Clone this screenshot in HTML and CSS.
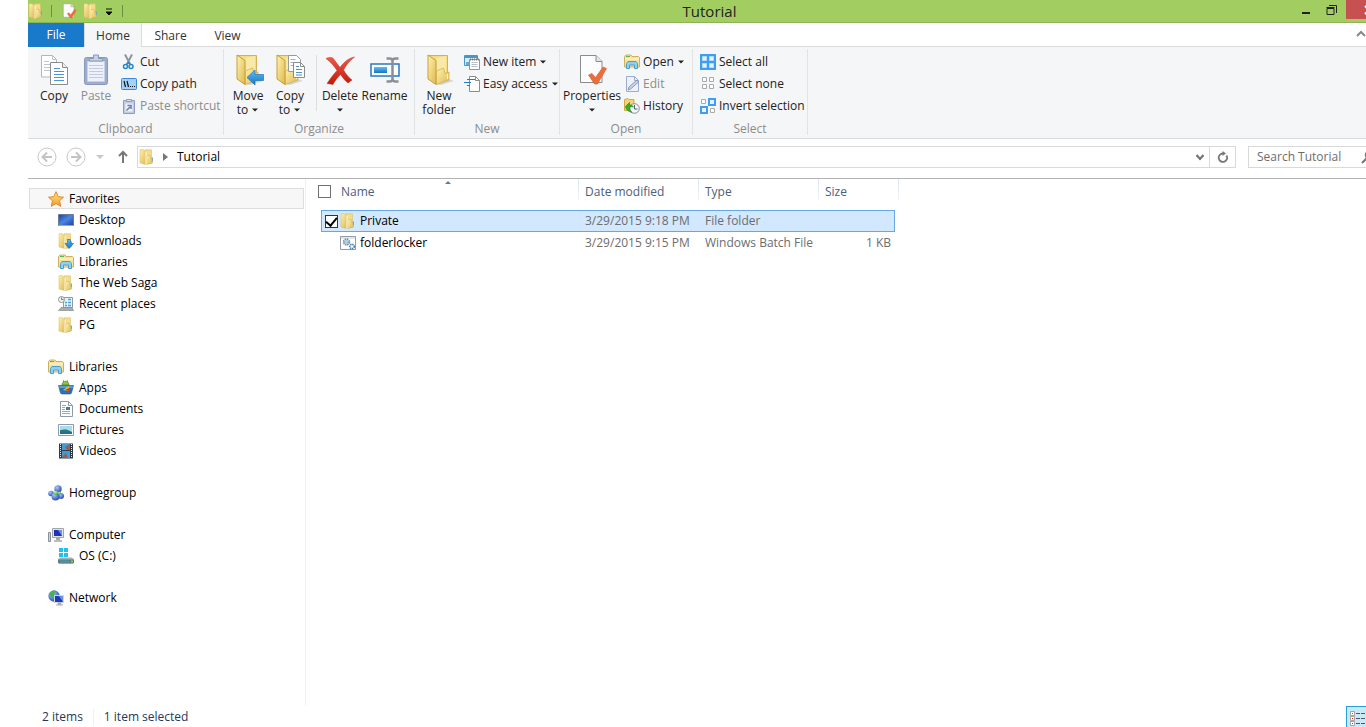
FILE: index.html
```html
<!DOCTYPE html>
<html lang="en">
<head>
  <meta charset="UTF-8">
  <meta name="viewport" content="width=device-width, initial-scale=1.0">
  <title>Tutorial</title>
  <link rel="stylesheet" href="styles.css">
</head>
<body>

<!-- shared icons -->
<svg class="sprite" aria-hidden="true">
  <defs>
    <linearGradient id="gold" x1="0" y1="0" x2="1" y2="1">
      <stop offset="0" stop-color="#fdf3b4"/>
      <stop offset="1" stop-color="#e0b84c"/>
    </linearGradient>
    <linearGradient id="blue" x1="0" y1="0" x2="0" y2="1">
      <stop offset="0" stop-color="#5cc0f5"/>
      <stop offset="1" stop-color="#1673c4"/>
    </linearGradient>
    <linearGradient id="screen" x1="0" y1="0" x2="1" y2="1">
      <stop offset="0" stop-color="#1b3fae"/>
      <stop offset="0.5" stop-color="#4a86e0"/>
      <stop offset="1" stop-color="#1c3f9c"/>
    </linearGradient>
    <linearGradient id="star" x1="0" y1="0" x2="0" y2="1">
      <stop offset="0" stop-color="#ffe98a"/>
      <stop offset="1" stop-color="#f79a1e"/>
    </linearGradient>
    <linearGradient id="red" x1="0" y1="0" x2="0" y2="1">
      <stop offset="0" stop-color="#f0594a"/>
      <stop offset="1" stop-color="#c01808"/>
    </linearGradient>
    <radialGradient id="ball" cx="0.35" cy="0.3" r="0.8">
      <stop offset="0" stop-color="#a8c8ff"/>
      <stop offset="1" stop-color="#1f3fa8"/>
    </radialGradient>
    <radialGradient id="leaf" cx="0.35" cy="0.3" r="0.8">
      <stop offset="0" stop-color="#c4f2a0"/>
      <stop offset="1" stop-color="#2f9a3c"/>
    </radialGradient>
  </defs>

  <symbol id="folder" viewBox="0 0 16 16">
    <path d="M6 .8h6.500V14L8 15z" fill="#f3dd8b" stroke="#d8b75a" stroke-width=".5"/>
    <path d="M1 .8 4 .5l2.500 2v13L1 14z" fill="url(#gold)" stroke="#d9b75a" stroke-width=".5"/>
    <path d="m7.500 7 3.500-1 .5 3.500 2-.5v5l-6 1.500z" fill="url(#gold)" stroke="#d2ab48" stroke-width=".5"/>
    <path d="M7 2.500v13" stroke="#fffbe0"/>
    <path d="M13.300 8.500v3.500" stroke="#5ca8cc"/>
  </symbol>

  <symbol id="folder-big" viewBox="0 0 32 32">
    <path d="M23 24 31 27 18 31 9 29z" fill="#000" opacity=".13"/>
    <path d="M5 1.500h19.500V22l-11 8z" fill="#f6dc7c" stroke="#cba23c" stroke-width=".8"/>
    <path d="M13.500 4 23 2v24l-9.500 3z" fill="#f8e9a9"/>
    <path d="m5 1 8 5.500v24L5 25z" fill="url(#gold)" stroke="#c99f38"/>
    <path d="m13.500 17 7-3 1.500 5.500 4-1.500v8L13.500 30.500z" fill="url(#gold)" stroke="#d0a742" stroke-width=".7"/>
    <path d="M24.500 20v5" stroke="#fff5bf" stroke-width="1.300"/>
  </symbol>

  <symbol id="libraries" viewBox="0 0 16 16">
    <path d="M.5 2.500 2 1h5l1 1.500h6.500l1 1V13H.5z" fill="#f6e29a" stroke="#cdb060"/>
    <path d="M2 2.500h4" stroke="#59b94d"/>
    <path d="M1 5h14" stroke="#fff8d8"/>
    <path d="M2.500 14.500v-5l1.500-2h8l1.500 2v5h-3V11h-5v3.500z" fill="#8fd0f2" stroke="#4a9fd0"/>
  </symbol>

  <symbol id="page-check" viewBox="0 0 32 32">
    <path d="M4.500 1.500H20l6 6v21h-21.500z" fill="#fdfdfd" stroke="#8b8b8b"/>
    <path d="M20 1.500v6h6" fill="#e5e5e5" stroke="#8b8b8b"/>
    <path d="m12.500 21 3.500-1.500 3.500 4L27 13l3.500 1.500-9 15.500h-3z" fill="#ea6e3c" stroke="#d9653a" stroke-width=".7"/>
  </symbol>

  <symbol id="caret" viewBox="0 0 8 8">
    <path d="M1 2.500h6L4 5.500z" fill="currentColor"/>
  </symbol>
</svg>

<div class="window">

  <header class="titlebar">
    <div class="quick">
      <svg class="icon"><use href="#folder"/></svg>
      <span class="bar"></span>
      <button type="button" aria-label="Properties"><svg class="icon"><use href="#page-check"/></svg></button>
      <button type="button" aria-label="New folder"><svg class="icon"><use href="#folder"/></svg></button>
      <button type="button" aria-label="Customize" class="customize">
        <svg width="8" height="8"><path d="M1 1h6M1 4h6L4 7z" fill="#111" stroke="#111" stroke-width="1"/></svg>
      </button>
      <span class="bar"></span>
    </div>
    <h1>Tutorial</h1>
    <div class="controls">
      <button type="button" aria-label="Minimize"><svg width="12" height="12"><path d="M2 9h8" stroke="#222" stroke-width="2"/></svg></button>
      <button type="button" aria-label="Restore"><svg width="12" height="12"><path d="M1 4.500h7v6H1z" fill="none" stroke="#222"/><path d="M.5 3.500h8" stroke="#222"/><path d="M3 1.500h7.500V9" fill="none" stroke="#222"/></svg></button>
      <button type="button" aria-label="Close" class="close"><svg width="10" height="10"><path d="m1 1 8 8M9 1 1 9" stroke="#fff" stroke-width="2"/></svg></button>
    </div>
  </header>

  <nav class="tabs">
    <a href="#" class="tab file">File</a>
    <a href="#" class="tab active">Home</a>
    <a href="#" class="tab">Share</a>
    <a href="#" class="tab">View</a>
    <button type="button" class="collapse" aria-label="Minimize the Ribbon"><svg width="10" height="8"><path d="m1 6 4-4 4 4" fill="none" stroke="#888" stroke-width="2"/></svg></button>
  </nav>

  <div class="ribbon">
    <section class="group clipboard">
      <div class="tools">
        <button type="button" class="large">
          <svg class="big" viewBox="0 0 32 32">
            <path d="M3.500 1.500h11l4 4v17.500h-15z" fill="#fff" stroke="#b5b5b5"/>
            <path d="M14.500 1.500v4h4M6 7.500h5M6 10.500h7M6 13.500h6M6 16.500h6" fill="none" stroke="#c0c6d0"/>
            <path d="M12.500 8.500h12l5 5v17h-17z" fill="#fff" stroke="#8c8c8c"/>
            <path d="M24.500 8.500v5h5" fill="#eee" stroke="#8c8c8c"/>
            <path d="M16 14.500h6M16 17.500h10M16 20.500h10M16 23.500h10M16 26.500h10" stroke="#4a95d4"/>
          </svg>
          <span>Copy</span>
        </button>
        <button type="button" class="large" disabled>
          <svg class="big" viewBox="0 0 32 32">
            <rect x="4.500" y="3.500" width="23" height="27" rx="2" fill="#9dadcc" stroke="#8798ba"/>
            <path d="M7.500 7.500h17v20h-17z" fill="#eef1f9" stroke="#c8d1e3"/>
            <path d="M9 11.500h14M9 14.500h14M9 17.500h14M9 20.500h14M9 23.500h14" stroke="#c3ccdf"/>
            <path d="M9.500 7V4.500h4V1h5v3.500h4V7z" fill="#c8d1e5" stroke="#8798ba"/>
          </svg>
          <span>Paste</span>
        </button>
        <div class="stack">
          <button type="button" class="small">
            <svg class="icon" viewBox="0 0 16 16">
              <path d="m4 .5 5 9.500M11 .5 6 10" stroke="#8c96a0" stroke-width="2"/>
              <circle cx="4.500" cy="12.500" r="2" fill="none" stroke="#2487cc" stroke-width="1.500"/>
              <circle cx="10" cy="12.500" r="2" fill="none" stroke="#2487cc" stroke-width="1.500"/>
              <path d="m5.500 10.500 2-2 2 2" fill="none" stroke="#2487cc" stroke-width="1.500"/>
            </svg>Cut
          </button>
          <button type="button" class="small">
            <svg class="icon" viewBox="0 0 16 16">
              <rect x=".5" y="2.500" width="15" height="11" rx="1" fill="#a4d2fb" stroke="#3789dc"/>
              <path d="m3 5 1.500 6M6 5l1.500 6M9 10.500h1M11 10.500h1M13 10.500h1" stroke="#111" stroke-width="1.200"/>
            </svg>Copy path
          </button>
          <button type="button" class="small" disabled>
            <svg class="icon" viewBox="0 0 16 16">
              <path d="M2.500 2.500h11v13h-11z" fill="#c1cce1" stroke="#8e9dbd"/>
              <path d="M4.500 5.500h7v8h-7z" fill="#eef2fa"/>
              <path d="M5.500 1.500h5v2h-5z" fill="#dce2ef" stroke="#8e9dbd"/>
              <path d="M5.500 12.500 9 9M6.500 7.500h3.500V11" fill="none" stroke="#6d7fa5" stroke-width="1.500"/>
            </svg>Paste shortcut
          </button>
        </div>
      </div>
      <h2>Clipboard</h2>
    </section>

    <section class="group organize">
      <div class="tools">
        <button type="button" class="large">
          <svg class="big" viewBox="0 0 32 32">
            <use href="#folder-big" width="32" height="32"/>
            <path d="m15 23.500 8-7.500v4.500h8.500v6H23V31z" fill="url(#blue)" stroke="#2673b5" stroke-width=".7"/>
          </svg>
          <span>Move<br>to <svg class="caret"><use href="#caret"/></svg></span>
        </button>
        <button type="button" class="large">
          <svg class="big" viewBox="0 0 32 32">
            <use href="#folder-big" width="32" height="32" x="-2"/>
            <path d="M14.500 1.500h8l4 4v12h-12z" fill="#fff" stroke="#999"/>
            <path d="M16.500 5.500h5M16.500 8.500h8M16.500 11.500h8" stroke="#9bb4cd"/>
            <path d="M19.500 8.500h7l4 4v11h-11z" fill="#fff" stroke="#8c8c8c"/>
            <path d="M26.500 8.500v4h4" fill="none" stroke="#8c8c8c"/>
            <path d="M22 12.500h3M22 15.500h6M22 18.500h6M22 21h6" stroke="#568ebd"/>
          </svg>
          <span>Copy<br>to <svg class="caret"><use href="#caret"/></svg></span>
        </button>
        <i class="divider"></i>
        <button type="button" class="large">
          <svg class="big" viewBox="0 0 32 32">
            <path d="M2 4.500C7 2.500 9 3.500 10 5.500l6 8C20 8 25 4 30.500 3c-5 4-8.500 8-11 13 2.500 4 5 7.500 8.500 10l-4 3c-3-2-5-5-7.500-8.500C13 24 11 27 9 30.500l-6-1C6 25 9 21 13 16.500 10 12 7 8 2 4.500z" fill="url(#red)" stroke="#b73427" stroke-width=".5"/>
          </svg>
          <span>Delete<br><svg class="caret"><use href="#caret"/></svg></span>
        </button>
        <button type="button" class="large rename">
          <svg class="big" viewBox="0 0 32 32">
            <path d="M2 10h28v12H2z" fill="#fff" stroke="#2a78bd" stroke-width="1.500"/>
            <path d="M5 13h13v6H5z" fill="url(#blue)"/>
            <path d="M17.500 4.500h3q3 0 3 2.500v18q0 2.500-3 2.500h-3M29.500 4.500h-3q-3 0-3 2.500M29.500 27.500h-3q-3 0-3-2.500" fill="none" stroke="#8b9096" stroke-width="2.500"/>
          </svg>
          <span>Rename</span>
        </button>
      </div>
      <h2>Organize</h2>
    </section>

    <section class="group new">
      <div class="tools">
        <button type="button" class="large">
          <svg class="big"><use href="#folder-big"/></svg>
          <span>New<br>folder</span>
        </button>
        <div class="stack">
          <button type="button" class="small">
            <svg class="icon" viewBox="0 0 16 16">
              <path d="M.5 1.500h13v10H.5z" fill="#d8edfa" stroke="#4796c9"/>
              <path d="M1 3h12" stroke="#4796c9" stroke-width="2"/>
              <path d="M2 8h5v3H2z" fill="#65abd6"/>
              <path d="M5.500 5.500h10v10h-10z" fill="#fff" stroke="#929292"/>
              <path d="M6 5.500h9" stroke="#777" stroke-dasharray="1 1" stroke-width="2"/>
              <path d="M7.500 8.500h6M7.500 10.500h6M7.500 12.500h6" stroke="#b6bec6"/>
            </svg>New item<svg class="caret"><use href="#caret"/></svg>
          </button>
          <button type="button" class="small">
            <svg class="icon" viewBox="0 0 16 16">
              <path d="M5.500.5h6l4 4v11h-10z" fill="#fff" stroke="#8d8d8d"/>
              <path d="M11.500.5v4h4" fill="none" stroke="#8d8d8d"/>
              <path d="M3 3.500h8M0 6.500h7M3 9.500h3" stroke="#2579cf"/>
            </svg>Easy access<svg class="caret"><use href="#caret"/></svg>
          </button>
        </div>
      </div>
      <h2>New</h2>
    </section>

    <section class="group open">
      <div class="tools">
        <button type="button" class="large">
          <svg class="big"><use href="#page-check"/></svg>
          <span>Properties<br><svg class="caret"><use href="#caret"/></svg></span>
        </button>
        <div class="stack">
          <button type="button" class="small"><svg class="icon"><use href="#libraries"/></svg>Open<svg class="caret"><use href="#caret"/></svg></button>
          <button type="button" class="small" disabled>
            <svg class="icon" viewBox="0 0 16 16">
              <path d="M2.500.5h8l4 4v11h-12z" fill="#edf1f9" stroke="#9daccb"/>
              <path d="M10.500.5v4h4" fill="none" stroke="#9daccb"/>
              <path d="m4 14 1-3 8-7 1.500 2-8 7z" fill="#cbd6ea" stroke="#8497bd"/>
            </svg>Edit
          </button>
          <button type="button" class="small">
            <svg class="icon" viewBox="0 0 16 16">
              <path d="M.5 1.500 4 .5l1 1h5v11H.5z" fill="#f2d477" stroke="#d2aa43"/>
              <circle cx="10.500" cy="10.500" r="4.800" fill="#f4f6f8" stroke="#858d96"/>
              <path d="M10.500 7v4h3" fill="none" stroke="#55626e"/>
              <path d="m1.500 8.500 4-4v2.500c2 0 3 .5 4 2-2-.5-3-.5-4 .5 0 2 1 3.500 2.500 5-4-1-6-3-6.500-6z" fill="#35b22b" stroke="#1c8118" stroke-width=".6"/>
            </svg>History
          </button>
        </div>
      </div>
      <h2>Open</h2>
    </section>

    <section class="group select">
      <div class="tools">
        <div class="stack">
          <button type="button" class="small">
            <svg class="icon" viewBox="0 0 16 16">
              <path d="M0 0h16v16H0z" fill="#3f9df4"/>
              <path d="M2.500 2.500h4v4h-4zM9.500 2.500h4v4h-4zM2.500 9.500h4v4h-4zM9.500 9.500h4v4h-4z" fill="#e5f2ff" stroke="#b6dcff"/>
            </svg>Select all
          </button>
          <button type="button" class="small">
            <svg class="icon" viewBox="0 0 16 16">
              <path d="M2.500 1.500h4v4h-4zM9.500 1.500h4v4h-4zM2.500 8.500h4v4h-4zM9.500 8.500h4v4h-4z" fill="#fff" stroke="#aaa"/>
            </svg>Select none
          </button>
          <button type="button" class="small">
            <svg class="icon" viewBox="0 0 16 16">
              <path d="M1.500 1.500h4v4h-4zM10.500 10.500h4v4h-4z" fill="#fff" stroke="#aaa"/>
              <path d="M9 1h6v6H9zM1 9h6v6H1z" fill="#e5f2ff" stroke="#3f9df4" stroke-width="2"/>
            </svg>Invert selection
          </button>
        </div>
      </div>
      <h2>Select</h2>
    </section>
  </div>

  <div class="location">
    <button type="button" aria-label="Back"><svg width="20" height="20"><circle cx="10" cy="10" r="9" fill="#fff" stroke="#c8c8c8"/><path d="M15 10H6M10 5.500 5.500 10l4.500 4.500" fill="none" stroke="#c4c4c4" stroke-width="2"/></svg></button>
    <button type="button" aria-label="Forward"><svg width="20" height="20"><circle cx="10" cy="10" r="9" fill="#fff" stroke="#c8c8c8"/><path d="M5 10h9M10 5.500l4.500 4.500-4.500 4.500" fill="none" stroke="#c4c4c4" stroke-width="2"/></svg></button>
    <button type="button" aria-label="Recent locations"><svg width="8" height="8"><path d="M0 2h8L4 6z" fill="#c8c8c8"/></svg></button>
    <button type="button" aria-label="Up"><svg width="10" height="14"><path d="M5 13V2M1 6l4-4 4 4" fill="none" stroke="#777" stroke-width="2"/></svg></button>
    <div class="address">
      <svg class="icon"><use href="#folder"/></svg>
      <svg width="6" height="8"><path d="M0 0v8l5-4z" fill="#777"/></svg>
      <a href="#">Tutorial</a>
      <button type="button" class="history" aria-label="Previous locations"><svg width="10" height="8"><path d="m1.500 2 3.500 4 3.500-4" fill="none" stroke="#707070" stroke-width="2"/></svg></button>
      <button type="button" class="refresh" aria-label="Refresh"><svg width="12" height="12"><path d="M9.500 4.500A4.200 4.200 0 1 1 6 2.500" fill="none" stroke="#777" stroke-width="1.800"/><path d="M5.500 0 9 2.500 5.500 5z" fill="#777"/></svg></button>
    </div>
    <div class="search">
      <input type="text" placeholder="Search Tutorial" aria-label="Search Tutorial">
      <svg width="14" height="14"><circle cx="8.500" cy="5" r="4" fill="none" stroke="#777" stroke-width="1.500"/><path d="m6 8-5 5" stroke="#777" stroke-width="2"/></svg>
    </div>
  </div>

  <main class="content">
    <nav class="sidebar">
      <ul>
        <li class="root selected"><a href="#"><svg class="icon" viewBox="0 0 16 16"><path d="m8 .7 2.200 5 5.300.5-4 3.600 1.200 5.500L8 12.500l-4.700 2.800 1.200-5.500-4-3.600 5.300-.5z" fill="url(#star)" stroke="#dc872b"/></svg>Favorites</a></li>
        <li><a href="#"><svg class="icon" viewBox="0 0 16 16"><path d="M.5 2.500h15v11H.5z" fill="url(#screen)" stroke="#6a7c92"/><path d="M1 13.500h14" stroke="#9aa9b6"/></svg>Desktop</a></li>
        <li><a href="#"><svg class="icon" viewBox="0 0 16 16"><use href="#folder" width="16" height="16"/><path d="M9.500 6.500h3v4h3L11 15.500l-4-5h2.500z" fill="url(#blue)" stroke="#2474b5" stroke-width=".7"/></svg>Downloads</a></li>
        <li><a href="#"><svg class="icon"><use href="#libraries"/></svg>Libraries</a></li>
        <li><a href="#"><svg class="icon"><use href="#folder"/></svg>The Web Saga</a></li>
        <li><a href="#"><svg class="icon" viewBox="0 0 16 16"><path d="M5.500 1.500h9v10h-9z" fill="#e4f2fa" stroke="#8e9ca8"/><path d="M7 6.500h2M10 6.500h3M7 9.500h2M10 9.500h3M10 3.500h3" stroke="#4ba3d4" stroke-width="1.500"/><path d="m3 11.500-2.500 3h15L14 11.500z" fill="#a8adb2" stroke="#858b91" stroke-width=".7"/><circle cx="3.500" cy="3.500" r="3" fill="#f3f3f3" stroke="#929292"/><path d="M3.500 1.500v2h2" fill="none" stroke="#777"/></svg>Recent places</a></li>
        <li><a href="#"><svg class="icon"><use href="#folder"/></svg>PG</a></li>
      </ul>
      <ul>
        <li class="root"><a href="#"><svg class="icon"><use href="#libraries"/></svg>Libraries</a></li>
        <li><a href="#"><svg class="icon" viewBox="0 0 16 16"><path d="M4 5c0-5 7-5 7 0z" fill="#8dc63d" stroke="#487b22" stroke-width=".7"/><path d="M5 1h1M9 1h1" stroke="#365e18"/><path d="M.5 5.500h15l-2 7.500-1 1h-9l-1-1z" fill="#2e72ae" stroke="#1c518b" stroke-width=".6"/><path d="M1 6h14l-.5 2h-13z" fill="#5a9fd2"/><path d="m5 10 6-4v5z" fill="#e4c42d"/><path d="m7 10 4-2v3z" fill="#d33a28"/></svg>Apps</a></li>
        <li><a href="#"><svg class="icon" viewBox="0 0 16 16"><path d="M2.500.5h8l4 4v11h-12z" fill="#fff" stroke="#8e9aa5"/><path d="M10.500.5v4h4" fill="none" stroke="#8e9aa5"/><path d="M4 4.500h4M4 6.500h3M4 8.500h3M4 10.500h8M4 12.500h8" stroke="#9ba9bc"/><path d="M8 6h4v3H8z" fill="#367cba"/></svg>Documents</a></li>
        <li><a href="#"><svg class="icon" viewBox="0 0 16 16"><path d="M.5 2.500h15v11H.5z" fill="#fff" stroke="#8e9aa5"/><path d="M2 4h12v8H2z" fill="#a7daf4"/><path d="M2 8c4 0 5-2 12 2v2H2z" fill="#2a7c73"/><path d="M2 10.500h12V12H2z" fill="#2269aa"/></svg>Pictures</a></li>
        <li><a href="#"><svg class="icon" viewBox="0 0 16 16"><path d="M1 .5h14v15H1z" fill="#303a42"/><path d="M4 1h8v6H4zM4 8h8v7H4z" fill="#3e9cdb"/><path d="m7 4 5-3v6H9zM4 14l4-4 2 5H4z" fill="#9c5b4b"/><path d="M2.500 1v14M13.500 1v14" stroke="#e9eef2" stroke-dasharray="1 1"/></svg>Videos</a></li>
      </ul>
      <ul>
        <li class="root"><a href="#"><svg class="icon" viewBox="0 0 16 16"><circle cx="10" cy="4" r="3.700" fill="url(#ball)"/><circle cx="3" cy="8.500" r="2.800" fill="url(#ball)"/><circle cx="13" cy="11" r="3" fill="url(#ball)"/><circle cx="7.500" cy="11.500" r="4" fill="url(#ball)"/><circle cx="8" cy="8" r="2.200" fill="url(#leaf)"/><circle cx="11.500" cy="8" r="1.500" fill="url(#leaf)"/></svg>Homegroup</a></li>
      </ul>
      <ul>
        <li class="root"><a href="#"><svg class="icon" viewBox="0 0 16 16"><path d="M.5 5.500h2v9h-2z" fill="#ccd1d5" stroke="#8b9197"/><path d="M4.500 1.500h11v9h-11z" fill="#e1e4e6" stroke="#a1a5a9"/><path d="M6 3h8v6H6z" fill="#1c34b4"/><path d="M10 3h4v6z" fill="#7292e0"/><path d="M8 11h4v2H8z" fill="#a5a9ad"/><path d="M6 14h8" stroke="#a5a9ad" stroke-width="1.500"/></svg>Computer</a></li>
        <li><a href="#"><svg class="icon" viewBox="0 0 16 16"><path d="M1 0h4v4H1zM6 0h4v4H6zM1 5h4v4H1zM6 5h4v4H6z" fill="#1fc0f2"/><path d="m2 9.500-2 2v3l1 1h14l1-1v-3l-2-2z" fill="#a8afb5"/><path d="M0 11.500h16v3l-1 1H1l-1-1z" fill="#697a83"/><path d="M2 13.500h9" stroke="#389cb8" stroke-width="2"/><path d="M13 12.500h2v2h-2z" fill="#5ee044"/></svg>OS (C:)</a></li>
      </ul>
      <ul>
        <li class="root"><a href="#"><svg class="icon" viewBox="0 0 16 16"><circle cx="6" cy="6" r="5.700" fill="url(#ball)"/><path d="M1 4c2-4 6-4 7-3L6 4l1 3-3 1zM2 9l3 2-1 0z" fill="#43b455"/><path d="M6.500 5.500h9v7h-9z" fill="#1d3bb6" stroke="#d1d6dc"/><path d="M11 6h4v6z" fill="#6c94e5"/><path d="M10 13h3v1.500h-3zM8 15h7" fill="#a7abae" stroke="#a7abae"/></svg>Network</a></li>
      </ul>
    </nav>

    <section class="files">
      <table>
        <thead>
          <tr>
            <th class="name sorted"><div><input type="checkbox" aria-label="Select all files">Name</div></th>
            <th>Date modified</th>
            <th>Type</th>
            <th class="size">Size</th>
          </tr>
        </thead>
        <tbody>
          <tr class="checked">
            <td class="name"><div><input type="checkbox" id="private" checked><label for="private"><svg class="icon"><use href="#folder"/></svg>Private</label></div></td>
            <td>3/29/2015 9:18 PM</td>
            <td>File folder</td>
            <td></td>
          </tr>
          <tr>
            <td class="name"><div><a href="#"><svg class="icon" viewBox="0 0 16 16"><path d="M.5 1.500h15v13H.5z" fill="#fff" stroke="#939ba3"/><path d="M1 3h14" stroke="#c6ced5"/><circle cx="6.500" cy="7" r="2.800" fill="#d8e8f5" stroke="#6d93b5" stroke-width="1.800" stroke-dasharray="1.500 .7"/><circle cx="6.500" cy="7" r="1" fill="#fff" stroke="#6d93b5" stroke-width=".6"/><circle cx="12" cy="11.500" r="2.200" fill="#fff" stroke="#4f82b3" stroke-width="1.700" stroke-dasharray="1.300 .6"/></svg>folderlocker</a></div></td>
            <td>3/29/2015 9:15 PM</td>
            <td>Windows Batch File</td>
            <td class="amount">1 KB</td>
          </tr>
        </tbody>
      </table>
    </section>
  </main>

  <footer class="status">
    <span>2 items</span>
    <span>1 item selected</span>
    <button type="button" class="details" aria-label="Details view">
      <svg width="18" height="16">
        <path d="M1.500 1.500h4v4h-4zM1.500 6.500h4v4h-4zM1.500 11.500h4v4h-4z" fill="#fff" stroke="#a5a5a5"/>
        <path d="M3 3h1v1H3z" fill="#1c9a38"/><path d="M3 8h1v1H3z" fill="#d31818"/><path d="M3 13h1v1H3z" fill="#1862ce"/>
        <path d="M7 3.500h4M12 3.500h4M7 8.500h4M12 8.500h4M7 13.500h4M12 13.500h4" stroke="#4b5870"/>
      </svg>
    </button>
  </footer>
</div>

</body>
</html>
```
FILE: styles.css
```css
* {
  box-sizing: border-box;
}

body {
  margin: 0;
  overflow: hidden;
  background: #fff;
  color: #000;
  font-family: "Open Sans", "Noto Sans", sans-serif;
  font-size: 12px;
  line-height: 16px;
}

button {
  margin: 0;
  padding: 0;
  border: none;
  background: none;
  color: inherit;
  font: inherit;
}

a {
  color: inherit;
  text-decoration: none;
}

svg {
  display: block;
  flex: none;
}

.sprite {
  position: absolute;
  width: 0;
  height: 0;
}

.icon {
  width: 16px;
  height: 16px;
}

.caret {
  display: inline-block;
  width: 8px;
  height: 8px;
}

/* the window runs past the right side of the screen */
.window {
  display: flex;
  flex-direction: column;
  height: 100vh;
  margin-left: 28px;
  margin-right: -25px;
}

/* Title bar */
.titlebar {
  display: grid;
  grid-template-columns: 1fr auto 1fr;
  height: 23px;
  background: #a2ce61;
  border-bottom: 1px solid #8db355;
}

.titlebar h1 {
  margin: 0;
  color: #222;
  font-size: 15px;
  font-weight: normal;
  line-height: 22px;
}

.quick {
  display: flex;
  align-items: center;
  gap: 6px;
}

.bar {
  width: 1px;
  height: 12px;
  margin: 0 3px 0 1px;
  background: #6f8d45;
}

.customize {
  padding: 2px 2px 0 0;
}

.controls {
  display: flex;
  justify-content: flex-end;
}

.controls button {
  display: grid;
  place-items: center;
  width: 26px;
  height: 19px;
}

.controls .close {
  width: 45px;
  margin-left: 1px;
  background: #c75050;
}

/* Tabs */
.tabs {
  display: flex;
  height: 24px;
  border-bottom: 1px solid #dadbdc;
  color: #333;
}

.tab {
  width: 57px;
  height: 24px;
  line-height: 26px;
  text-align: center;
}

.tab.file {
  width: 56px;
  background: #1979ca;
  color: #fff;
  line-height: 24px;
}

.tab.active {
  width: 58px;
  border: 1px solid #dadbdc;
  border-width: 0 1px;
  background: #f5f6f7;
}

.collapse {
  margin: 0 25px 2px auto;
}

/* Ribbon */
.ribbon {
  display: flex;
  height: 92px;
  padding-top: 2px;
  background: #f5f6f7;
  border-bottom: 1px solid #dadbdc;
  color: #222;
}

.group {
  display: flex;
  flex-direction: column;
  height: 86px;
  border-right: 1px solid #e2e3e4;
}

.clipboard {
  width: 196px;
}

.organize {
  width: 191px;
}

.new {
  width: 145px;
}

.open {
  width: 133px;
}

.select {
  width: 115px;
}

.tools {
  display: flex;
  flex: 1;
  padding: 2px 3px 0;
}

.clipboard .tools {
  padding-left: 5px;
}

.group h2 {
  margin: 0;
  color: #8c8c8c;
  font-size: 12px;
  font-weight: normal;
  line-height: 12px;
  text-align: center;
}

.large {
  display: flex;
  flex-direction: column;
  align-items: center;
  gap: 3px;
  min-width: 42px;
  height: 66px;
  padding-top: 3px;
  line-height: 14px;
  white-space: nowrap;
}

.large.rename {
  min-width: 47px;
}

.open .large {
  min-width: 58px;
}

.big {
  width: 32px;
  height: 32px;
}

.divider {
  width: 1px;
  height: 56px;
  margin: 4px 2px 0 5px;
  background: #dddfe1;
}

.stack {
  display: flex;
  flex-direction: column;
  padding-left: 4px;
}

.open .stack {
  padding-left: 3px;
}

.small {
  display: flex;
  align-items: center;
  gap: 3px;
  height: 22px;
  white-space: nowrap;
}

button:disabled {
  color: #8c8c8c;
}

/* Address bar */
.location {
  display: flex;
  align-items: center;
  height: 40px;
  padding: 0 7px 3px 9px;
  border-bottom: 1px solid #b4b4b4;
}

.location > button {
  margin-right: 9px;
}

.location > button:nth-of-type(3) {
  margin: 0 14px 0 1px;
}

.address {
  display: flex;
  flex: 1;
  align-items: center;
  gap: 8px;
  height: 22px;
  padding-left: 1px;
  border: 1px solid #d9d9d9;
}

.history {
  margin-left: auto;
}

.address .refresh {
  display: grid;
  place-items: center;
  width: 26px;
  height: 20px;
  margin-left: -4px;
  border-left: 1px solid #d9d9d9;
}

.search {
  display: flex;
  align-items: center;
  width: 136px;
  height: 22px;
  margin-left: 12px;
  padding-left: 8px;
  border: 1px solid #d9d9d9;
}

.search input {
  width: 104px;
  padding: 0;
  border: none;
  outline: none;
  color: #333;
  font: inherit;
}

.search input::placeholder {
  color: #6d6d6d;
  opacity: 1;
}

/* Main area */
.content {
  display: flex;
  flex: 1;
  min-height: 0;
}

.sidebar {
  width: 278px;
  padding: 9px 1px 0;
  border-right: 1px solid #f0f0f0;
}

.sidebar ul {
  margin: 0 0 21px;
  padding: 0;
  list-style: none;
}

.sidebar a {
  display: flex;
  align-items: center;
  gap: 5px;
  height: 21px;
  padding-left: 29px;
}

.sidebar .root a {
  padding-left: 19px;
}

.sidebar .selected a {
  padding-left: 18px;
  border: 1px solid #dedede;
  background: #f7f7f7;
}

.files {
  flex: 1;
  padding-left: 15px;
}

.files table {
  width: 574px;
  border-collapse: collapse;
  table-layout: fixed;
}

.files th {
  position: relative;
  width: 120px;
  height: 31px;
  padding: 0 0 6px 10px;
  color: #4c607a;
  font-weight: normal;
  text-align: left;
}

.files th.size {
  width: 80px;
}

.files th.name {
  width: 254px;
  padding-left: 0;
}

/* column separators */
.files th::after {
  content: "";
  position: absolute;
  top: 0;
  right: -4px;
  width: 1px;
  height: 21px;
  background: linear-gradient(#dce8f5, #edf3fa);
}

/* sort arrow */
.files th.sorted::before {
  content: "";
  position: absolute;
  top: 2px;
  left: 124px;
  border: 3px solid transparent;
  border-top: none;
  border-bottom: 3px solid #527fa3;
}

.files td {
  height: 21px;
  padding: 0 0 0 10px;
  color: #6d6d6d;
  white-space: nowrap;
}

.files .checked td {
  height: 22px;
}

.files td.name {
  padding-left: 0;
  color: #000;
}

.files td.amount {
  padding-right: 4px;
  text-align: right;
}

.name div,
.name label,
.name a {
  display: flex;
  align-items: center;
}

.name label,
.name a {
  gap: 4px;
}

.name a {
  margin-left: 19px;
}

.name input {
  display: grid;
  place-items: center;
  appearance: none;
  width: 13px;
  height: 13px;
  margin: 0 10px 0 -3px;
  border: 1px solid #707070;
  background: #fff;
}

td.name input {
  margin: 0 2px 0 4px;
  border-color: #333;
}

.name input:checked::after {
  content: "";
  width: 5px;
  height: 9px;
  border: solid #000;
  border-width: 0 2px 2px 0;
  transform: translateY(-1px) rotate(40deg);
}

.checked {
  outline: 1px solid #66a7e8;
  outline-offset: -1px;
  background: #d1e8ff;
}

/* Status bar */
.status {
  display: flex;
  align-items: center;
  height: 22px;
  padding: 2px 23px 0 14px;
  color: #1e395b;
}

.status span {
  padding-right: 10px;
}

.status span + span {
  padding-left: 10px;
  border-left: 1px solid #f0f0f0;
}

.details {
  height: 22px;
  margin-left: auto;
  padding: 1px 0 0 2px;
  border: 1px solid #26a0da;
  background: #cbe8f6;
}
```
